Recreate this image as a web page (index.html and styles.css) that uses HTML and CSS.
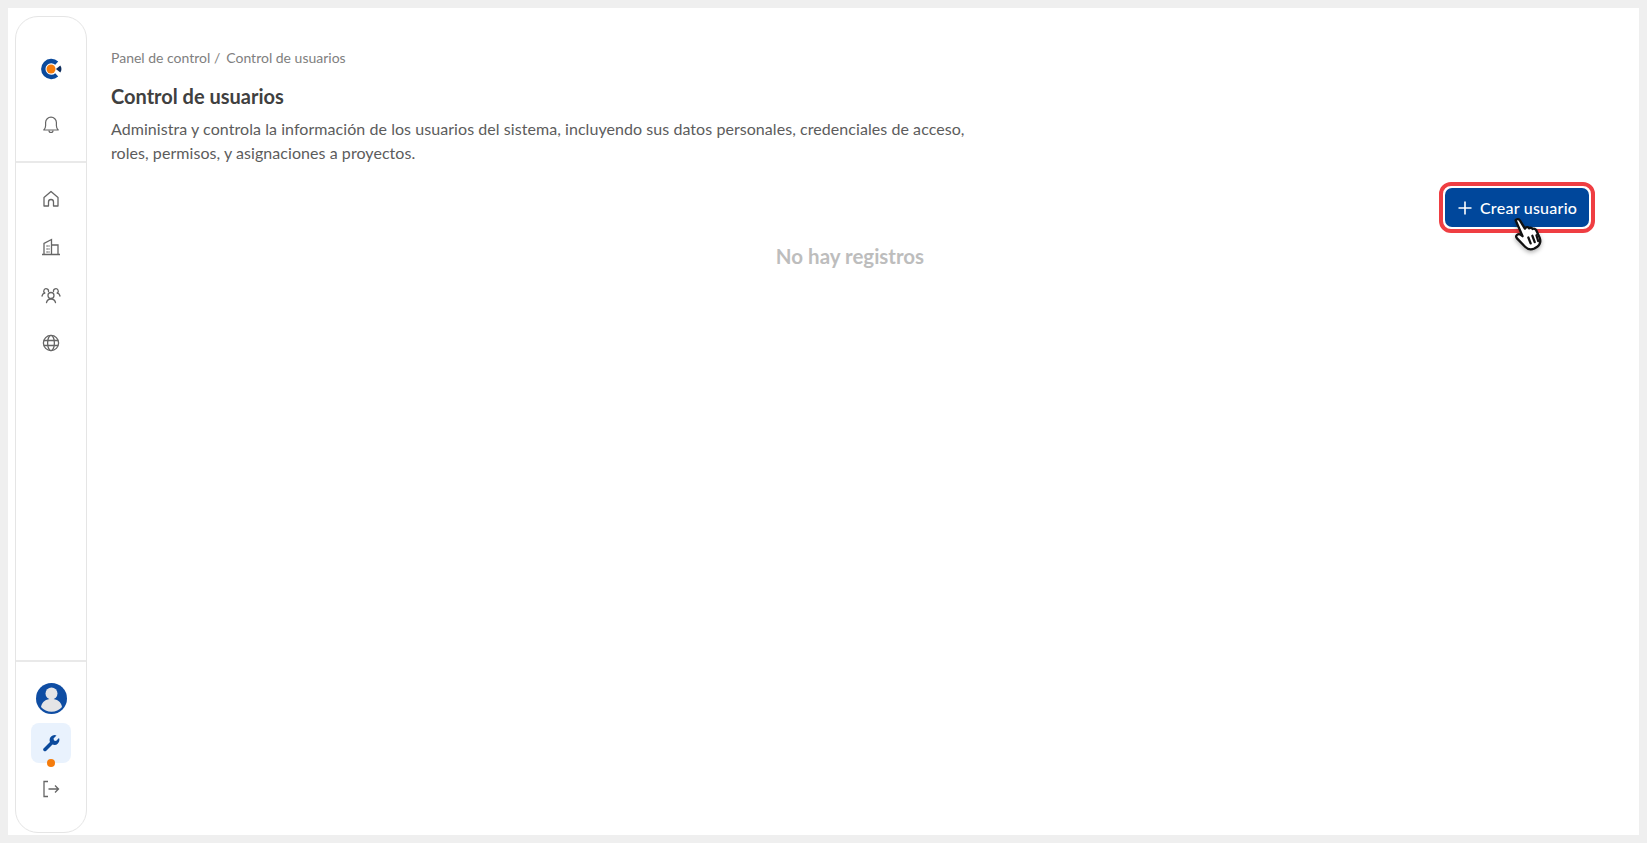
FILE: index.html
```html
<!DOCTYPE html>
<html lang="es">
<head>
<meta charset="utf-8">
<title>Control de usuarios</title>
<link rel="stylesheet" href="styles.css">
</head>
<body>
<div class="frame">
  <aside class="sidebar">
    <div class="side-top">
      <svg class="logo" width="22" height="22" viewBox="0 0 20 20"><path d="M15.2 4.600A7.300 7.300 0 1 0 15.200 15.400" fill="none" stroke="#0b4a9c" stroke-width="4"/><circle cx="10" cy="10" r="4.100" fill="#f57c0c"/><path d="M14.500 10l4-3.200a6 6 0 0 1 0 6.400z" fill="#0d2c5c"/></svg>
      <svg class="icon" width="18" height="18" viewBox="0 0 18 18" fill="none" stroke="#666" stroke-width="1.200"><path d="M1.800 14c1.200-1.200 1.800-2.400 1.800-4.200V6.600a5.400 5.400 0 0 1 10.800 0v3.200c0 1.800.6 3 1.800 4.200z" stroke-linejoin="round"/><path d="M7 14.500a2 2 0 0 0 4 0"/></svg>
    </div>
    <nav class="side-nav">
      <svg class="icon" width="18" height="18" viewBox="0 0 18 18" fill="none" stroke="#666" stroke-width="1.300" stroke-linejoin="round"><path d="M2 16V7.500L9 1.500l7 6V16h-4.500v-4a2.500 2.500 0 0 0-5 0v4z"/></svg>
      <svg class="icon" width="20" height="18" viewBox="0 0 20 18" fill="none" stroke="#666" stroke-width="1.300"><path d="M1 16.500h18M3 16.500V5.500L10.500 1.500v15M10.500 7H17v9.500"/><path d="M5.500 8h3M5.500 11h3M5.500 14h3" stroke-width="1.500" stroke-dasharray="1.200 .8"/></svg>
      <svg class="icon" width="20" height="18" viewBox="0 0 20 18" fill="none" stroke="#666" stroke-width="1.300" stroke-linecap="round"><circle cx="10" cy="9.500" r="3"/><path d="M5.500 16.500c.5-2 2.300-3.500 4.500-3.500s4 1.500 4.500 3.500"/><path d="M7.500 5.500a2.400 2.400 0 1 0-3.800 1.500M12.500 5.500a2.400 2.400 0 1 1 3.800 1.500"/><path d="M1 10c.3-1.500 1.300-2.700 2.700-3M19 10c-.3-1.500-1.300-2.700-2.700-3"/></svg>
      <svg class="icon" width="18" height="18" viewBox="0 0 18 18" fill="none" stroke="#666" stroke-width="1.300"><circle cx="9" cy="9" r="7.600"/><ellipse cx="9" cy="9" rx="3.400" ry="7.600"/><path d="M1.800 6.500h14.400M1.800 11.500h14.400"/></svg>
    </nav>
    <div class="side-bottom">
      <svg class="avatar" width="31" height="31" viewBox="0 0 31 31"><circle cx="15.500" cy="15.500" r="15.500" fill="#0f4da3"/><circle cx="15.500" cy="10.500" r="6" fill="#e4e4e6"/><path d="M5 24c1-5.500 5-8 10.500-8S25 18.500 26 24a14 14 0 0 1-21 0z" fill="#e4e4e6"/></svg>
      <div class="tool">
        <svg width="18" height="18" viewBox="0 0 18 18"><path d="M1.500 14.500 8 8a5 5 0 0 1 6.500-6.500L11.500 4.500l.5 2 2 .5 3-3A5 5 0 0 1 10.500 10.500L4 17a1.800 1.800 0 0 1-2.500-2.500z" fill="#0b4a9c"/></svg>
        <span class="dot"></span>
      </div>
      <svg class="icon" width="18" height="18" viewBox="0 0 18 18" fill="none" stroke="#666" stroke-width="1.300"><path d="M6 1.500H2v15h4"/><path d="M6.500 9h10M13 5.500 16.500 9 13 12.500"/></svg>
    </div>
  </aside>
  <main class="content">
    <div class="crumbs"><span>Panel de control /</span><span>Control de usuarios</span></div>
    <h1 class="title">Control de usuarios</h1>
    <p class="desc">Administra y controla la información de los usuarios del sistema, incluyendo sus datos personales, credenciales de acceso, roles, permisos, y asignaciones a proyectos.</p>
    <div class="actions">
      <div class="highlight">
        <button class="btn"><svg width="14" height="14" viewBox="0 0 14 14" stroke="#fff" stroke-width="1.600"><path d="M7 0.500v13M0.500 7h13"/></svg>Crear usuario</button>
        <svg class="cursor" width="35" height="37" viewBox="0 0 30 32"><path d="M3 4.500c1-1.500 3-1 3.800.3l4.200 7 .7-.8c1-.8 2.300-.5 3 .5 1-.8 2.500-.5 3 .6 1.200-.6 2.500-.2 3 .9l3 6.500c1.200 3 .5 6-2 8l-2.500 1.500c-3 1.300-6 .5-8-1.500L4 20c-1-1.200-.5-2.800 1-3.300 1-.3 2 0 2.800.6l1.200 1z" fill="#fff" stroke="#111" stroke-width="2" stroke-linejoin="round"/><path d="M14 19.500l2 5M17.500 18l2 5.500M21 17.500l1.500 5" stroke="#111" stroke-width="2" stroke-linecap="round"/></svg>
      </div>
    </div>
    <div class="empty">No hay registros</div>
  </main>
</div>
</body>
</html>
```
FILE: styles.css
```css
* { box-sizing: border-box; }
html, body { margin: 0; height: 100%; }
body {
  background: #efefef;
  padding: 8px;
  font-family: "Lato", "Noto Sans", sans-serif;
  overflow: hidden;
}
.frame {
  display: flex;
  height: 827px;
  background: #fff;
  padding: 8px 0 2px 7px;
}
.sidebar {
  width: 72px;
  flex: none;
  display: flex;
  flex-direction: column;
  border: 1px solid #e5e5e5;
  border-radius: 23px;
}
.side-top {
  height: 146px;
  flex: none;
  border-bottom: 2px solid #e9e9e9;
  display: flex;
  flex-direction: column;
  align-items: center;
  gap: 36px;
  padding-top: 41px;
}
.side-nav {
  flex: 1;
  display: flex;
  flex-direction: column;
  align-items: center;
  gap: 30px;
  padding-top: 27px;
}
.side-bottom {
  height: 172px;
  flex: none;
  border-top: 2px solid #e9e9e9;
  display: flex;
  flex-direction: column;
  align-items: center;
  padding-top: 21px;
}
.icon, .logo, .avatar { display: block; flex: none; }
.tool {
  position: relative;
  width: 40px;
  height: 40px;
  margin-top: 9px;
  margin-bottom: 17px;
  background: #e9f2fd;
  border-radius: 8px;
  display: flex;
  align-items: center;
  justify-content: center;
}
.dot {
  position: absolute;
  left: 16px;
  bottom: -4px;
  width: 8px;
  height: 8px;
  background: #f57c0c;
  border-radius: 50%;
}
.content {
  flex: 1;
  padding: 32px 44px 0 24px;
  min-width: 0;
}
.crumbs {
  display: flex;
  gap: 6px;
  font-size: 14px;
  line-height: 20px;
  color: #808080;
}
.title {
  margin: 14px 0 0;
  font-size: 20px;
  line-height: 28px;
  font-weight: 700;
  color: #404040;
}
.desc {
  margin: 7px 0 0;
  width: 860px;
  font-size: 16px;
  letter-spacing: 0.06px;
  line-height: 23.500px;
  color: #5c5c5c;
}
.actions {
  display: flex;
  justify-content: flex-end;
  margin-top: 18px;
}
.highlight {
  position: relative;
  padding: 2px;
  border: 4px solid #ef3e42;
  border-radius: 12px;
  display: flex;
}
.btn {
  display: flex;
  align-items: center;
  gap: 8px;
  width: 144px;
  height: 39px;
  padding: 0 0 0 13px;
  background: #00479b;
  border: 0;
  border-radius: 7px;
  color: #fff;
  font-family: inherit;
  font-size: 16px;
  letter-spacing: 0.25px;
  font-weight: 500;
}
.cursor {
  position: absolute;
  left: 69px;
  top: 29px;
  filter: drop-shadow(0 2px 2px rgba(0,0,0,.3));
}
.empty {
  margin: 9px 6px 0 0;
  text-align: center;
  font-size: 20.500px;
  line-height: 28px;
  font-weight: 700;
  color: #bdbdbd;
}
```
